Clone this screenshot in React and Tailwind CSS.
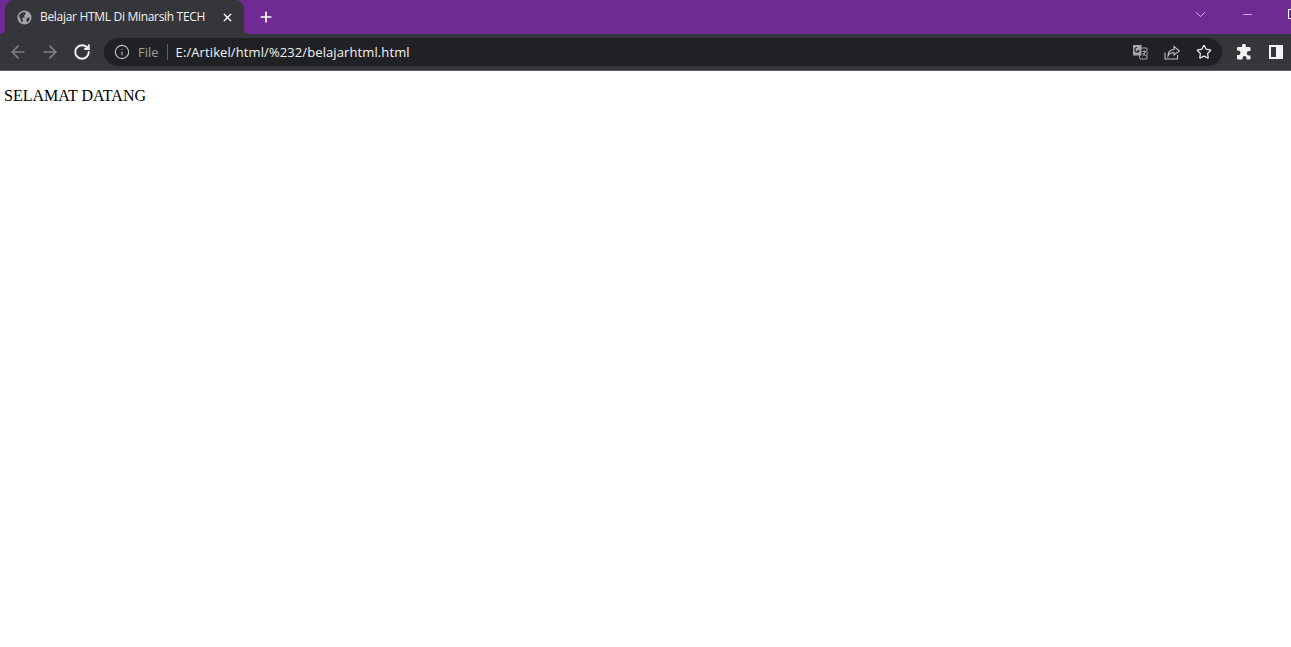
import React from "react";
import { ArrowLeft, ArrowRight, RotateCw, Info, X, Plus, ChevronDown, Minus, Star } from "lucide-react";

const App = () => {
  return (
    <div className="flex h-[647px] w-[1291px] flex-col overflow-hidden bg-white font-['Open_Sans',sans-serif]">
      {/* title bar */}
      <div className="flex h-[34px] shrink-0 items-stretch bg-[#702a94]">
        <div className="relative ml-[5px] flex w-[239px] items-center rounded-t-[9px] bg-[#35363a] pl-3 pr-[10px] text-white">
          <span className="absolute -left-[5px] bottom-0 h-[5px] w-[5px] bg-[radial-gradient(circle_at_0_0,#702a94_5px,#35363a_5px)]" />
          <span className="absolute -right-[5px] bottom-0 h-[5px] w-[5px] bg-[radial-gradient(circle_at_100%_0,#702a94_5px,#35363a_5px)]" />
          <svg width="15" height="15" viewBox="0 0 16 16" className="shrink-0">
            <circle cx="8" cy="8" r="7.5" fill="#a3a4a7" />
            <path d="M2 5.5 L5 3 L8 2 L9.5 4 L7.5 6 L8 8 L5.5 8.5 L6.5 12 L5 13 L3.5 9.5 Z" fill="#35363a" />
            <path d="M10.5 8.5 L13.5 8 L13 11 L11 13 L10 11 Z" fill="#35363a" />
          </svg>
          <span className="ml-[8px] flex-1 whitespace-nowrap text-[12px] leading-none tracking-[-0.31px] text-[#f1f1f2]">Belajar HTML Di Minarsih TECH</span>
          <X size={13} strokeWidth={2.6} className="shrink-0 text-white" />
        </div>
        <div className="ml-[14px] flex items-center">
          <Plus size={16} strokeWidth={2.6} className="text-white" />
        </div>
        <div className="ml-auto flex items-center">
          <ChevronDown size={17} strokeWidth={1.2} className="mb-[6px] mr-[32px] text-[#e5d5ee]" />
          <Minus size={13} strokeWidth={1.2} className="mb-[6px] mr-[34px] text-white" />
          <div className="mb-[6px] -mr-[7px] h-[10px] w-[10px] shrink-0 border border-white" />
        </div>
      </div>
      {/* toolbar */}
      <div className="flex h-[37px] shrink-0 items-center border-b border-b-[#5f6063] bg-[#35363a]">
        <div className="ml-[8px] flex w-[96px] items-center">
          <ArrowLeft size={20} strokeWidth={2} className="text-[#7f8083]" />
          <ArrowRight size={20} strokeWidth={2} className="ml-[12px] text-[#7f8083]" />
          <RotateCw size={18} strokeWidth={2.6} className="ml-[13px] text-[#eef0f2]" />
        </div>
        <div className="flex h-[28px] w-[1118px] items-center rounded-full bg-[#202124] pl-[10px] pr-[10px]">
          <Info size={16} strokeWidth={1.7} className="text-[#bdc1c6]" />
          <span className="ml-[8px] text-[13px] leading-none text-[#9aa0a6]">File</span>
          <span className="ml-[8px] h-[16px] w-px bg-[#5f6368]" />
          <span className="ml-[8px] flex-1 whitespace-nowrap text-[13px] leading-none tracking-[0.1px] text-[#f1f3f4]">E:/Artikel/html/%232/belajarhtml.html</span>
          <svg width="16" height="16" viewBox="0 0 16 16" className="mr-[16px] shrink-0">
            <path d="M6 4 H15 V15 H8 Z" fill="none" stroke="#9aa0a6" strokeWidth="1" />
            <rect x="1" y="1" width="8.5" height="10.5" fill="#a5a8ac" />
            <path d="M5.2 3.5 a2.3 2.3 0 1 0 2 3.2 H5.3" fill="none" stroke="#202124" strokeWidth="1.1" />
            <path d="M10.5 7.5 H14 M12.2 6.5 V7.5 M13.3 7.5 Q12.5 11 10.5 12 M11 9 Q12 11 14 12" fill="none" stroke="#bdc1c6" strokeWidth="0.9" />
          </svg>
          <svg width="16" height="16" viewBox="0 0 16 16" className="mr-[16px] shrink-0" fill="none" stroke="#bdc1c6" strokeWidth="1.1">
            <path d="M1 8.5 V15 H13.5 V11" />
            <path d="M4 12 C4 8 6.5 5.5 10 5.5 V2.5 L15.5 7 L10 11 V8.5 C7.5 8.5 5.5 9.5 4 12 Z" />
          </svg>
          <Star size={16} strokeWidth={1.8} className="shrink-0 text-[#e8eaed]" />
        </div>
        <svg width="16" height="16" viewBox="0 0 16 16" className="ml-[14px] shrink-0" fill="#f1f3f4">
          <path d="M6.2 0.8 a1.9 1.9 0 0 1 3.6 0.6 V3 H13.5 a1 1 0 0 1 1 1 V7 H13 a2 2 0 0 0 0 4.4 h1.5 V14.5 a1 1 0 0 1 -1 1 H10.5 V14 a2 2 0 0 0 -4 0 v1.5 H2 a1 1 0 0 1 -1 -1 V11 h1.3 a2.2 2.2 0 0 0 0 -4.4 H1 V4 a1 1 0 0 1 1 -1 H6 Z" />
        </svg>
        <div className="ml-[17px] flex h-[14px] w-[14px] shrink-0 justify-end border-2 border-[#f1f3f4]">
          <div className="h-full w-[5px] bg-[#f1f3f4]" />
        </div>
      </div>
      {/* page */}
      <div className="flex-1 bg-white pl-[4px] pt-[16px] font-['Liberation_Serif',serif] text-[16px] leading-[18px] text-black">
        <p>SELAMAT DATANG</p>
      </div>
    </div>
  );
};

export default App;
